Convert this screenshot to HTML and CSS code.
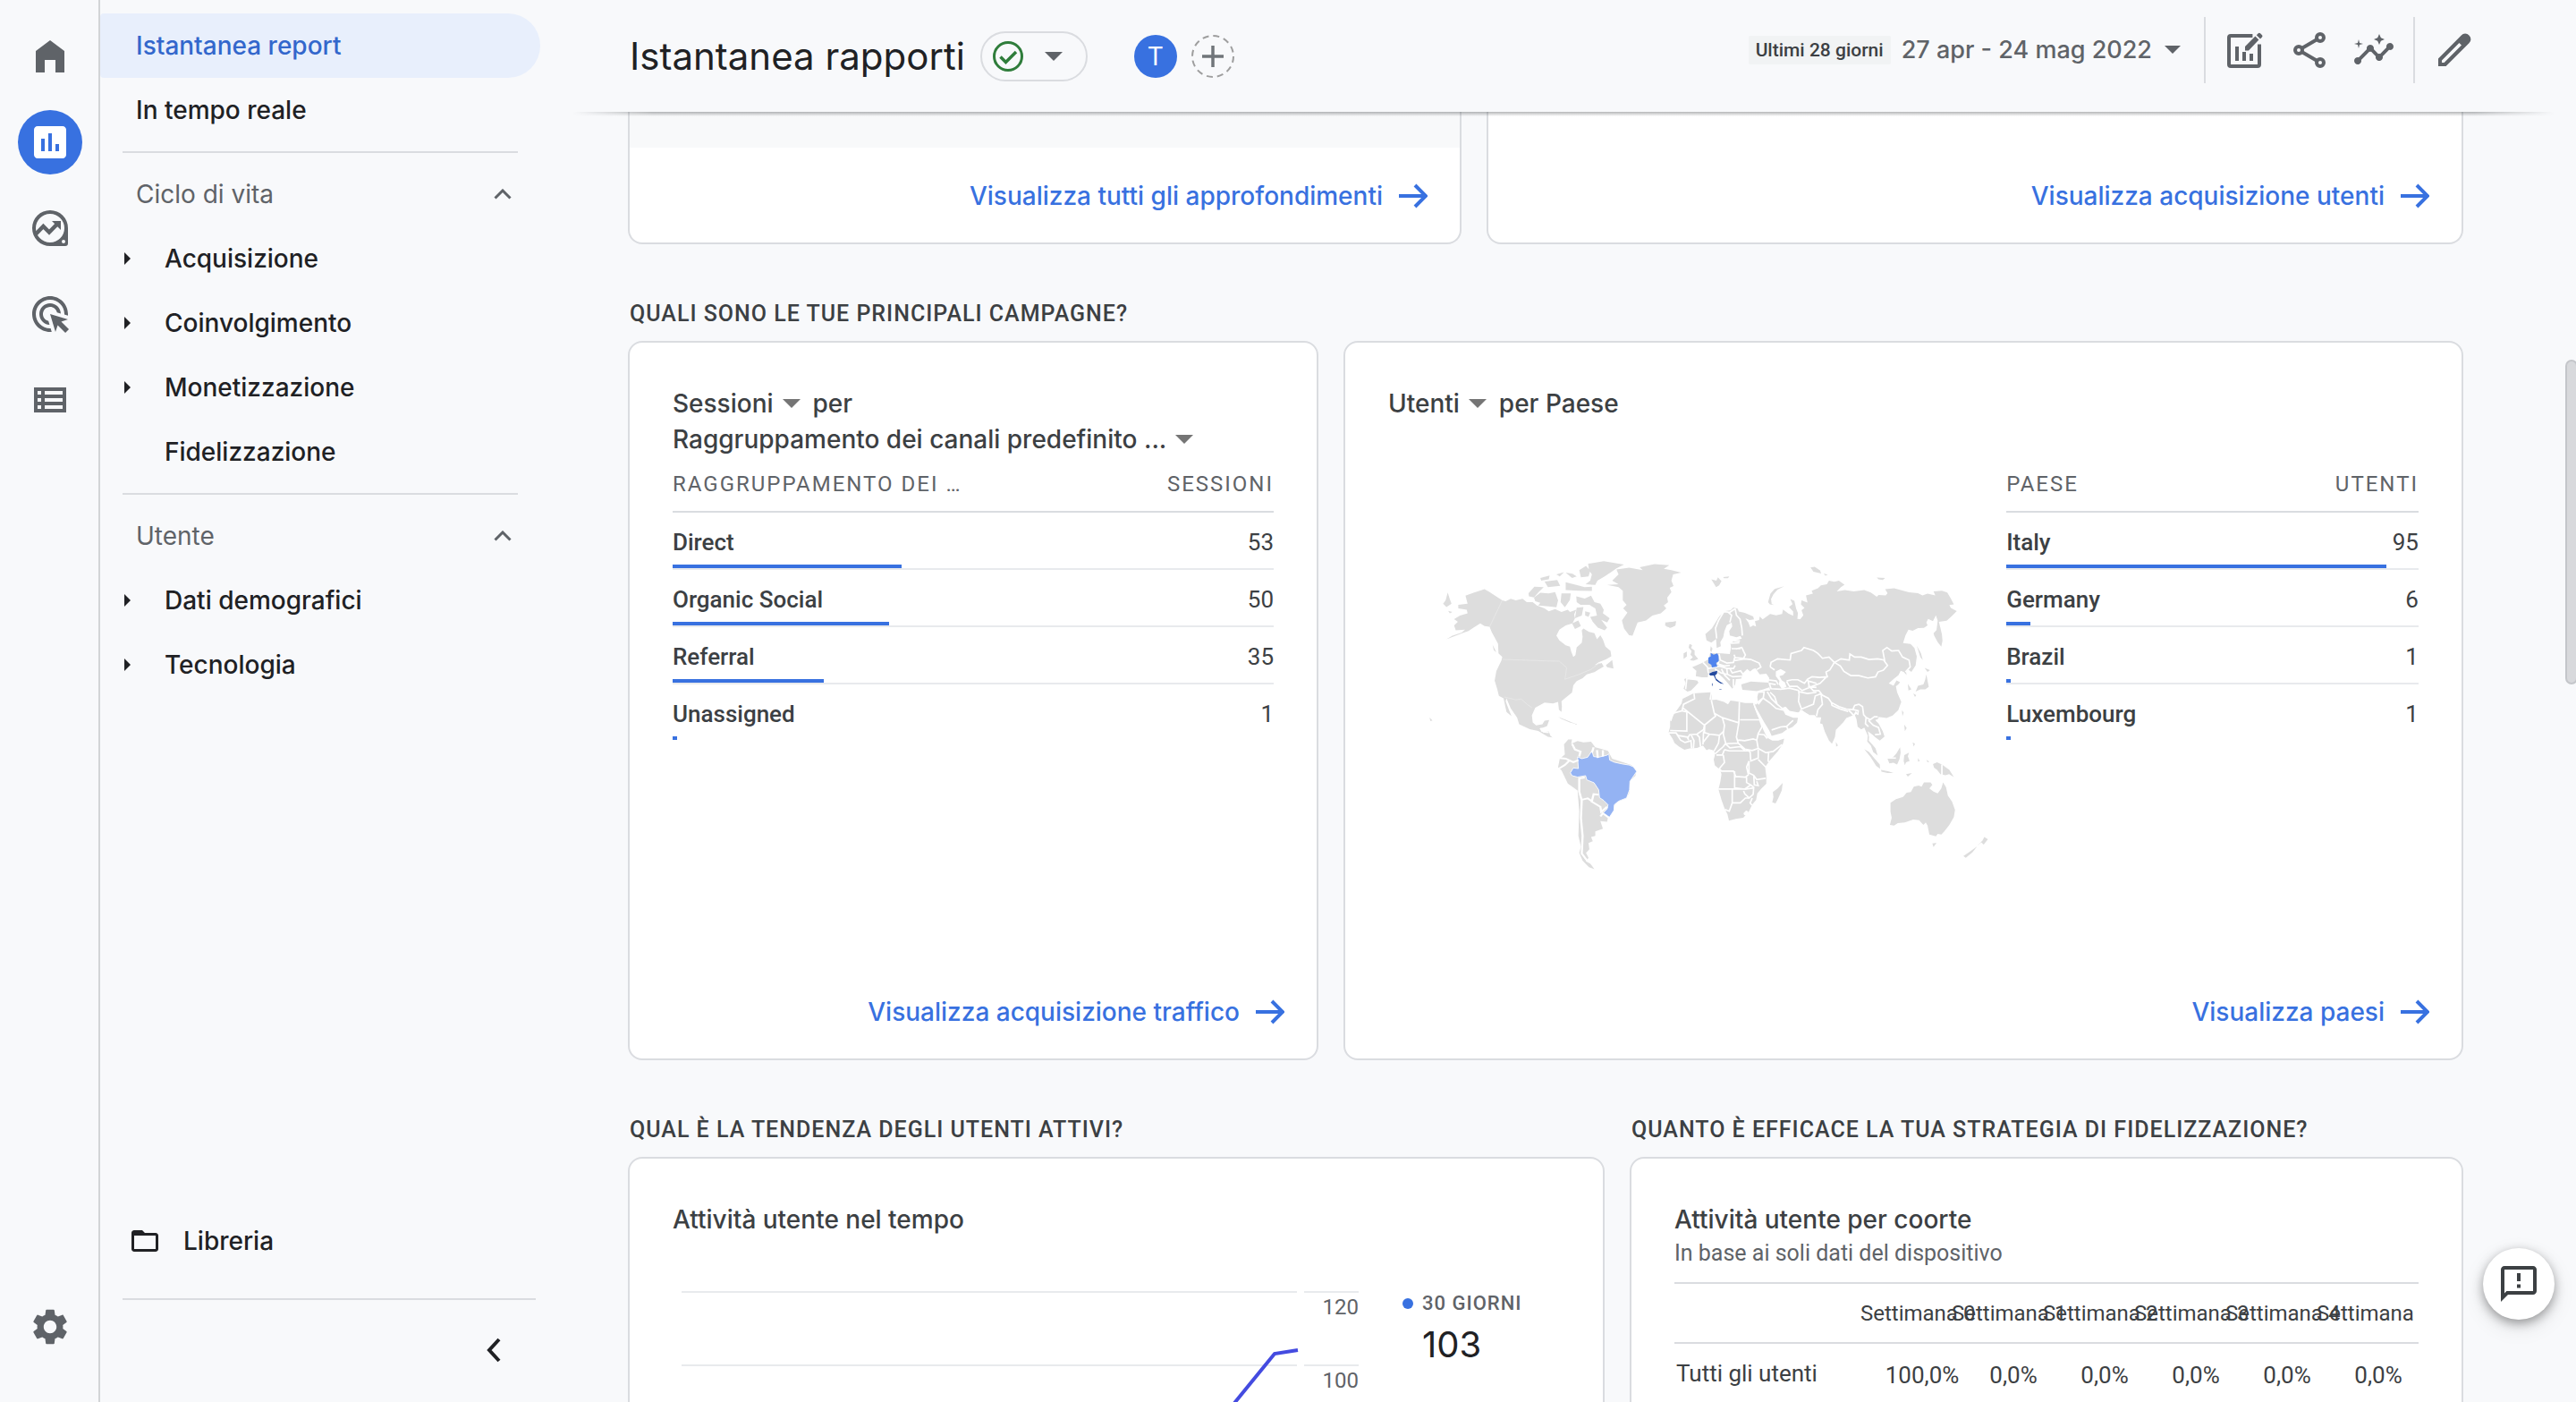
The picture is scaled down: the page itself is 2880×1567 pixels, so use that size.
FILE: index.html
```html
<!DOCTYPE html>
<html lang="it">
<head>
<meta charset="utf-8">
<title>Istantanea rapporti</title>
<link rel="stylesheet" href="styles.css">
</head>
<body>
<svg class="defs" aria-hidden="true">
  <symbol id="i-caret" viewBox="0 0 20 10"><path d="M0 0h20L10 10z"/></symbol>
  <symbol id="i-tri" viewBox="0 0 8 14"><path d="M0 0l7 7-7 7z"/></symbol>
  <symbol id="i-up" viewBox="0 0 20 12"><path d="M1.500 10.500L10 2l8.500 8.500" fill="none" stroke="currentColor" stroke-width="3"/></symbol>
  <symbol id="i-arrow" viewBox="0 0 32 28"><path d="M0 14h30M18 2l12 12-12 12" fill="none" stroke="currentColor" stroke-width="4"/></symbol>
</svg>
<div class="app">
  <nav class="rail" aria-label="Navigazione principale">
    <a class="rail-item" href="#" aria-label="Home"><svg class="icon" viewBox="0 0 24 24"><path d="M12 3L4 9v12h5v-7h6v7h5V9z"/></svg></a>
    <a class="rail-item rail-item--active" href="#" aria-label="Report"><svg class="icon" viewBox="0 0 24 24"><path d="M19 3H5c-1.100 0-2 .9-2 2v14c0 1.100.9 2 2 2h14c1.100 0 2-.9 2-2V5c0-1.100-.9-2-2-2zM9 17H7v-7h2v7zm4 0h-2V7h2v10zm4 0h-2v-4h2v4z"/></svg></a>
    <a class="rail-item" href="#" aria-label="Esplora"><svg class="icon" viewBox="0 0 24 24"><path fill-rule="evenodd" d="M12 2a10 10 0 0 1 10 10v8.500a1.500 1.500 0 0 1-1.500 1.500H12a10 10 0 0 1 0-20zm0 2a8 8 0 1 0 0 16 8 8 0 0 0 0-16zm7.500 14.500a1 1 0 1 0 0 2 1 1 0 0 0 0-2z"/><path d="M4 15.300l4.200-4.300 3.300 3.300 4.500-4.600" fill="none" stroke="currentColor" stroke-width="2.200"/><path d="M13 8h5v5z"/></svg></a>
    <a class="rail-item" href="#" aria-label="Pubblicità"><svg class="icon" viewBox="0 0 24 24"><path d="M11.710 17.990C8.530 17.840 6 15.220 6 12c0-3.310 2.690-6 6-6 3.220 0 5.840 2.530 5.990 5.710l-2.100-.63C15.480 9.310 13.890 8 12 8c-2.210 0-4 1.790-4 4 0 1.890 1.310 3.480 3.080 3.890l.63 2.100zM22 12c0 .3-.01.6-.04.9l-1.970-.59c.01-.1.01-.21.01-.31 0-4.420-3.580-8-8-8s-8 3.580-8 8 3.580 8 8 8c.1 0 .21 0 .31-.01l.59 1.970c-.3.03-.6.04-.9.04-5.520 0-10-4.480-10-10S6.480 2 12 2s10 4.480 10 10zm-3.770 4.260L22 15l-10-3 3 10 1.260-3.770 4.270 4.270 1.980-1.980-4.280-4.260z"/></svg></a>
    <a class="rail-item" href="#" aria-label="Configura"><svg class="icon" viewBox="0 0 24 24"><path d="M3 5v14h18V5H3zm4 2v2H5V7h2zm-2 6v-2h2v2H5zm0 2h2v2H5v-2zm14 2H9v-2h10v2zm0-4H9v-2h10v2zm0-4H9V7h10v2z"/></svg></a>
    <a class="rail-item rail-item--end" href="#" aria-label="Amministrazione"><svg class="icon" viewBox="0 0 24 24"><path d="M19.140 12.940c.04-.3.06-.61.06-.94 0-.32-.02-.64-.07-.94l2.030-1.580c.18-.14.23-.41.12-.61l-1.920-3.320c-.12-.22-.37-.29-.59-.22l-2.390.96c-.5-.38-1.030-.7-1.620-.94l-.36-2.540c-.04-.24-.24-.41-.48-.41h-3.840c-.24 0-.43.17-.47.41l-.36 2.540c-.59.24-1.130.57-1.620.94l-2.390-.96c-.22-.08-.47 0-.59.22L2.740 8.870c-.12.21-.08.47.12.61l2.030 1.580c-.05.3-.09.63-.09.94s.02.64.07.94l-2.030 1.580c-.18.14-.23.41-.12.61l1.920 3.320c.12.22.37.29.59.22l2.390-.96c.5.38 1.030.7 1.620.94l.36 2.540c.05.24.24.41.48.41h3.840c.24 0 .44-.17.47-.41l.36-2.540c.59-.24 1.130-.56 1.620-.94l2.390.96c.22.08.47 0 .59-.22l1.920-3.320c.12-.22.07-.47-.12-.61l-2.010-1.580zM12 15.600c-1.980 0-3.600-1.620-3.600-3.600s1.620-3.600 3.600-3.600 3.600 1.620 3.600 3.600-1.620 3.600-3.600 3.600z"/></svg></a>
  </nav>

  <aside class="side">
    <a class="side-row side-row--active" href="#">Istantanea report</a>
    <a class="side-row" href="#">In tempo reale</a>
    <hr class="side-line">
    <button class="side-row side-group" type="button">Ciclo di vita<svg class="chevron"><use href="#i-up"/></svg></button>
    <a class="side-row side-sub" href="#"><svg class="tri"><use href="#i-tri"/></svg>Acquisizione</a>
    <a class="side-row side-sub" href="#"><svg class="tri"><use href="#i-tri"/></svg>Coinvolgimento</a>
    <a class="side-row side-sub" href="#"><svg class="tri"><use href="#i-tri"/></svg>Monetizzazione</a>
    <a class="side-row side-sub" href="#"><span class="tri"></span>Fidelizzazione</a>
    <hr class="side-line">
    <button class="side-row side-group" type="button">Utente<svg class="chevron"><use href="#i-up"/></svg></button>
    <a class="side-row side-sub" href="#"><svg class="tri"><use href="#i-tri"/></svg>Dati demografici</a>
    <a class="side-row side-sub" href="#"><svg class="tri"><use href="#i-tri"/></svg>Tecnologia</a>
    <div class="side-foot">
      <a class="side-row side-library" href="#"><svg class="folder" viewBox="0 0 24 24"><path d="M20 6h-8l-2-2H4c-1.100 0-2 .9-2 2v12c0 1.100.9 2 2 2h16c1.100 0 2-.9 2-2V8c0-1.100-.9-2-2-2zm0 12H4V8h16v10z"/></svg>Libreria</a>
      <hr class="side-line side-line--wide">
      <button class="collapse" type="button" aria-label="Comprimi"><svg class="collapse-icon" viewBox="0 0 18 28"><path d="M15 2L4 14l11 12" fill="none" stroke="currentColor" stroke-width="4"/></svg></button>
    </div>
  </aside>

  <main class="main">
    <header class="head">
      <h1 class="title">Istantanea rapporti</h1>
      <button class="pill" type="button" aria-label="Stato dei dati">
        <svg class="check" viewBox="0 0 34 34"><circle cx="17" cy="17" r="15.500" fill="none" stroke="currentColor" stroke-width="3"/><path d="M8.500 17.500l6 6L26 12" fill="none" stroke="currentColor" stroke-width="3.500"/></svg>
        <svg class="caret"><use href="#i-caret"/></svg>
      </button>
      <span class="avatar">T</span>
      <button class="add" type="button" aria-label="Aggiungi confronto"><svg class="add-icon" viewBox="0 0 48 48"><circle cx="24" cy="24" r="23" fill="none" stroke="#9e9e9e" stroke-width="2" stroke-dasharray="7 5"/><path d="M12 24h24M24 12v24" stroke="#70757a" stroke-width="3.500"/></svg></button>
      <div class="tools">
        <button class="dates" type="button"><span class="range">Ultimi 28 giorni</span>27 apr - 24 mag 2022<svg class="caret caret--date"><use href="#i-caret"/></svg></button>
        <span class="bar-line"></span>
        <div class="tool-set">
          <button class="tool" type="button" aria-label="Personalizza report"><svg class="icon" viewBox="0 0 24 24"><path d="M16.200 4H4a1 1 0 0 0-1 1v15a1 1 0 0 0 1 1h15a1 1 0 0 0 1-1V8.800" fill="none" stroke="currentColor" stroke-width="2"/><path d="M6.500 10h2v8h-2zM10.500 13h2v5h-2zM14.500 14h2v4h-2z"/><path d="M12 12.200V10l5.700-5.700 2 2L14 12.200zM18.400 3.600l1-1a.8.8 0 0 1 1.100 0l1 1a.8.8 0 0 1 0 1.100l-1 1z"/></svg></button>
          <button class="tool" type="button" aria-label="Condividi"><svg class="icon" viewBox="0 0 24 24"><path d="M18 5L6 12l12 7" fill="none" stroke="currentColor" stroke-width="2"/><g fill="#f8f9fb" stroke="currentColor" stroke-width="2"><circle cx="18" cy="5" r="2"/><circle cx="6" cy="12" r="2"/><circle cx="18" cy="19" r="2"/></g></svg></button>
          <button class="tool" type="button" aria-label="Approfondimenti"><svg class="icon" viewBox="0 0 24 24"><path d="M21 8c-1.450 0-2.260 1.440-1.930 2.510l-3.550 3.560c-.3-.09-.74-.09-1.040 0l-2.550-2.550C12.270 10.450 11.460 9 10 9c-1.450 0-2.270 1.440-1.930 2.520l-4.560 4.550C2.440 15.740 1 16.550 1 18c0 1.100.9 2 2 2 1.450 0 2.260-1.440 1.930-2.510l4.550-4.560c.3.09.74.09 1.040 0l2.550 2.550C12.730 16.550 13.540 18 15 18c1.450 0 2.270-1.440 1.930-2.520l3.560-3.550C21.560 12.260 23 11.450 23 10c0-1.100-.9-2-2-2z"/><path d="M15 9l.94-2.070L18 6l-2.060-.93L15 3l-.92 2.070L12 6l2.080.93zM3.500 11L4 9l2-.5L4 8l-.5-2L3 8l-2 .5L3 9z"/></svg></button>
        </div>
        <span class="bar-line"></span>
        <button class="tool" type="button" aria-label="Modifica"><svg class="icon" viewBox="0 0 24 24"><path fill-rule="evenodd" d="M3 21v-4.300L15.900 3.800a2.800 2.800 0 0 1 4.300 0 2.800 2.800 0 0 1 0 4.300L7.300 21zM5 19h1.300L16 9.300 14.700 8 5 17.700z"/></svg></button>
      </div>
    </header>

    <div class="scroll">
      <div class="cards">
        <section class="card card--cut span-6">
          <div class="strip"></div>
          <a class="more" href="#">Visualizza tutti gli approfondimenti<svg class="arrow"><use href="#i-arrow"/></svg></a>
        </section>
        <section class="card card--cut span-7">
          <a class="more" href="#">Visualizza acquisizione utenti<svg class="arrow"><use href="#i-arrow"/></svg></a>
        </section>
      </div>

      <div class="cards">
        <h2 class="question span-13">QUALI SONO LE TUE PRINCIPALI CAMPAGNE?</h2>
        <section class="card card--tall span-5">
          <div class="card-body">
            <h3 class="card-title"><button class="pick" type="button">Sessioni<svg class="caret caret--pick"><use href="#i-caret"/></svg></button>per<br><button class="pick" type="button">Raggruppamento dei canali predefinito ...<svg class="caret caret--pick"><use href="#i-caret"/></svg></button></h3>
            <table class="data">
              <thead><tr><th scope="col">RAGGRUPPAMENTO DEI …</th><th scope="col">SESSIONI</th></tr></thead>
              <tbody>
                <tr><th scope="row">Direct<i class="meter" style="width:38.1%"></i></th><td>53</td></tr>
                <tr><th scope="row">Organic Social<i class="meter" style="width:36%"></i></th><td>50</td></tr>
                <tr><th scope="row">Referral<i class="meter" style="width:25.2%"></i></th><td>35</td></tr>
                <tr><th scope="row">Unassigned<i class="meter" style="width:0.7%"></i></th><td>1</td></tr>
              </tbody>
            </table>
          </div>
          <a class="more" href="#">Visualizza acquisizione traffico<svg class="arrow"><use href="#i-arrow"/></svg></a>
        </section>
        <section class="card card--tall span-8">
          <div class="card-body">
            <h3 class="card-title"><button class="pick" type="button">Utenti<svg class="caret caret--pick"><use href="#i-caret"/></svg></button>per Paese</h3>
            <div class="geo">
              <svg class="map" viewBox="0 0 690 480" role="img" aria-label="Mappa degli utenti per Paese">
                <g transform="translate(-52 -131) scale(.47194 .39541)">
                  <g class="land">
                    <path d="M293 722L312 714 338 704 350 712 380 735 388 738 400 731 412 735 428 731 438 740 452 740 462 750 480 758 490 766 505 760 520 768 535 762 540 768 555 762 550 775 552 786 546 800 530 806 515 818 508 835 515 848 530 862 540 866 543 880 548 895 553 890 556 868 568 855 570 838 568 820 572 815 585 824 598 828 604 845 612 834 618 846 624 866 636 878 638 893 625 902 608 910 598 918 615 912 620 922 608 930 598 938 580 944 570 955 556 963 548 975 545 995 530 1010 520 1020 521 1035 520 1050 514 1044 512 1022 500 1026 480 1024 458 1038 450 1060 452 1080 460 1088 475 1085 480 1075 491 1073 486 1090 478 1094 470 1096 472 1106 490 1105 494 1118 499 1122 488 1120 465 1104 445 1099 420 1085 415 1066 400 1040 390 1012 388 1020 395 1042 402 1062 390 1050 383 1012 372 1005 368 985 362 962 366 935 378 905 380 895 371 885 370 858 362 840 355 825 350 810 338 808 328 800 312 812 300 822 285 828 248 845 262 835 284 826 292 818 270 820 266 806 275 796 266 788 280 778 298 772 296 762 276 758 276 748 298 745z"/>
                    <path d="M628 692L655 690 640 680 655 662 650 648 680 643 712 650 705 642 740 633 775 636 762 646 780 650 803 657 784 662 780 680 785 695 776 700 780 712 770 728 772 740 762 750 768 758 755 772 735 778 720 792 700 798 688 835 680 834 668 815 663 792 676 770 666 758 674 748 665 735 665 708 655 698z"/>
                    <path d="M583 632L620 625 668 634 650 645 638 655 622 668 605 680 600 692 577 690 588 680 592 662 585 650zM562 650L578 638 588 652 584 668 566 670zM455 728L470 714 490 716 505 712 512 735 508 755 490 752 465 750 470 742 458 738zM442 715L456 697 478 698 466 712 455 727 443 724zM555 724L575 730 590 722 598 740 612 745 620 762 618 772 634 786 628 798 614 790 628 812 622 820 606 812 594 796 588 782 604 778 600 758 586 748 565 748 556 740zM480 682L510 678 517 694 488 698zM530 684L555 692 575 698 592 697 592 709 560 708 530 706zM520 716L542 716 540 734 528 755 518 740zM470 672L492 665 490 676 472 680zM508 662L526 656 516 668zM530 657L546 660 556 668 545 672zM556 756L572 754 568 778 552 786zM576 766L588 770 584 782 576 778zM545 800L560 792 566 808 552 816zM765 798L790 795 788 808 775 812 766 804zM625 918L640 904 643 928 628 924zM240 745L246 735 251 713 256 732 260 745 248 754zM357 860L366 882 360 876zM208 1066L215 1074 210 1076zM252 765L262 768 256 772zM512 1064L530 1072 545 1080 560 1086 540 1080 520 1070z"/>
                    <path d="M526 1142L536 1128 545 1128 543 1140 558 1132 572 1136 590 1134 600 1150 616 1155 630 1160 640 1182 685 1200 697 1215 695 1230 682 1245 680 1280 672 1295 648 1305 642 1330 630 1348 628 1360 612 1358 618 1380 600 1387 600 1400 590 1403 594 1415 584 1420 586 1438 578 1448 584 1462 578 1472 588 1478 598 1494 585 1488 570 1470 562 1448 566 1430 560 1400 562 1330 558 1272 535 1252 520 1215 512 1206 516 1182 528 1170z"/>
                  </g>
                  <path class="brazil" d="M541 1222L548 1208 560 1210 558 1177 568 1182 582 1178 592 1160 596 1176 608 1178 628 1172 632 1168 634 1186 645 1192 664 1197 680 1200 690 1205 698 1218 690 1232 682 1246 681 1270 674 1293 655 1302 645 1312 644 1328 633 1348 618 1336 628 1324 630 1312 620 1300 610 1292 608 1270 597 1250 580 1242 577 1230 558 1234 545 1230z"/>
                  <g class="faint"><path d="M380 735L350 810M381 902L435 904 480 906 515 907 532 925 530 945 528 958 560 945 590 930 610 912M385 1008L412 1016 425 1014 440 1030 450 1038"/></g>
                  <g class="edge"><path d="M562 1238L562 1275 568 1300 566 1350 570 1400 568 1450 582 1472M560 1238L575 1235M568 1298L582 1294 592 1302 596 1282 608 1284M590 1302L612 1318 614 1332 628 1318M612 1345L618 1336 634 1350M545 1140L552 1156 565 1162 562 1176M516 1180L530 1182 548 1192 560 1186M514 1210L528 1200 538 1188M596 1150L592 1165M604 1158L606 1180M618 1158L618 1176M470 1096L478 1106 490 1108"/></g>
                </g>
                <g transform="translate(298 119) scale(.33333)">
                  <g class="land">
                    <path d="M168 235L190 216 202 196 215 175 235 158 252 156 262 146 276 150 280 160 300 164 328 176 331 186 316 188 302 182 312 196 318 212 328 206 338 210 334 192 348 188 350 176 360 186 385 168 405 172 425 168 428 153 446 166 462 174 462 160 448 145 460 135 452 118 466 124 472 150 478 165 476 184 486 185 496 172 490 155 500 148 488 136 490 122 510 130 505 106 528 100 524 90 545 82 555 72 575 68 582 56 600 60 615 56 634 70 622 78 608 92 635 88 665 92 700 88 722 96 742 110 748 104 772 106 778 98 770 85 800 82 850 95 880 98 895 106 912 100 938 106 932 92 960 90 978 96 990 116 1000 136 985 138 990 148 1010 158 992 176 976 190 950 194 955 214 960 235 962 258 958 277 946 262 934 240 932 232 942 222 946 190 940 172 930 192 914 184 908 196 912 206 900 214 880 215 862 224 848 220 838 240 830 265 855 268 868 282 876 310 872 340 858 362 848 354 840 362 842 372 832 362 822 358 815 372 800 384 782 400 798 408 808 390 820 396 814 404 806 410 810 430 824 462 814 490 795 508 775 516 758 514 745 512 738 524 748 535 762 560 768 578 752 592 736 580 728 572 712 560 716 580 715 592 728 606 738 618 745 642 730 630 722 608 710 595 712 575 700 548 690 554 678 545 674 520 668 505 655 510 640 516 630 530 605 556 602 580 592 602 582 592 568 562 560 536 552 534 556 514 540 514 534 506 512 506 492 490 478 497 450 492 436 478 425 482 436 505 462 515 478 515 475 532 460 546 440 555 425 566 390 576 382 558 365 530 345 494 330 470 344 462 342 446 346 430 365 425 385 424 380 398 382 382 372 368 350 370 336 350 328 352 318 360 308 352 292 368 288 384 270 386 268 404 258 418 244 400 228 382 212 368 205 358 178 366 176 380 156 380 136 376 138 358 124 346 160 330 180 318 184 298 200 300 222 300 250 302 254 280 252 266 266 258 290 250 284 240 282 218 278 208 290 240 272 246 250 240 248 225 258 210 256 196 240 205 232 225 228 245 218 262 220 276 206 282 204 252 188 264 172 256z"/>
                    <path d="M288 404L320 394 355 396 380 398 386 412 362 420 340 426 318 424 292 422zM97 386L108 382 140 390 145 398 132 412 120 424 108 428 95 418 102 400zM115 268L124 272 120 282 132 290 132 304 144 318 128 324 116 322 126 312 118 304 122 292 112 280zM95 300L106 294 106 310 95 318zM184 290L186 276 192 284 188 296zM32 204L45 196 70 192 68 206 52 214 38 210zM188 52L205 56 210 45 222 58 214 72 204 78zM228 44L248 42 244 48 230 48zM520 12L534 10 552 22 556 32 530 26zM564 32L578 36 570 40zM742 46L770 47 762 54 748 52z"/>
                    <path d="M432 75L410 86 396 102 388 118 390 134 398 138 384 136 378 128 386 100 400 84zM876 274L890 300 896 322 888 312zM902 348L920 356 912 362zM908 370L916 412 904 420 888 420 872 428 880 408 898 404 904 388zM864 434L874 440 870 446zM846 402L858 420 848 424zM826 490L832 498 828 510zM605 596L612 608 606 612zM736 512L750 514 742 522z"/>
                    <path d="M700 620L716 630 735 652 752 672 753 686 740 676 722 648zM756 690L780 694 798 700 778 700 758 696zM778 652L796 648 808 634 820 614 822 632 818 654 810 672 798 666 784 668zM834 640L850 632 846 644 852 660 840 664 836 674 832 660zM834 538L842 550 836 560zM862 598L870 602 866 612zM880 650L886 660 880 662zM908 656L918 662 912 664zM930 670L944 664 960 672 985 690 1000 714 984 704 972 708 955 704 944 690 934 682zM840 704L860 700 846 712z"/>
                    <path d="M788 800L806 788 830 780 842 766 856 764 866 746 882 742 892 746 900 732 922 732 928 740 918 752 932 762 946 768 958 752 964 732 974 748 980 776 994 796 1004 824 1000 848 985 874 968 896 958 906 946 904 940 912 918 906 912 876 906 866 898 874 884 858 864 856 836 866 812 868 800 876 786 874 792 850 788 830zM928 936L942 934 932 948zM1032 978L1050 966 1078 946 1062 966 1040 984zM1078 944L1096 926 1102 914 1114 922 1100 940 1092 932z"/>
                    <path d="M128 434L150 432 185 430 190 440 188 456 205 455 230 462 244 470 252 458 270 460 300 466 328 466 334 486 344 510 354 530 362 556 375 582 392 592 412 592 432 585 428 602 410 628 386 655 368 680 372 710 372 736 356 752 342 768 338 790 325 806 314 828 295 850 270 854 247 860 242 838 232 818 222 790 212 755 218 730 222 705 218 690 200 675 196 655 200 640 198 625 180 620 172 624 160 608 140 616 115 618 98 622 80 612 65 600 58 585 45 565 50 545 50 525 62 505 88 468 92 452 112 442zM427 733L424 758 412 785 403 802 392 798 396 780 394 764 410 752z"/>
                  </g>
                  <path class="cutout" d="M404 360L420 352 438 362 428 372 416 376 424 390 434 396 440 412 424 418 414 404 416 392 404 376zM296 834a8 8 0 1 0 8-8zM330 372l30 0 10 12-16 8-30-2-30 4 6-14zM662 508l10-16 6 10z"/>
                  <g class="edge">
                    <path d="M330 468L345 505 362 545 378 580 M436 480L446 500 460 508"/>
                    <path d="M268 150L250 162 230 160 212 190 202 215 206 250M268 150L272 172 284 185 290 215 292 240M250 196L256 172 242 160M252 266L282 264M256 284L286 284M264 258L284 258M270 285L290 280 302 305 296 316 268 314 264 304M214 302L218 322 240 332 262 330 266 314M264 324L300 318 320 320 348 332 354 346 340 354M178 350L200 346 215 342 240 350 262 350 268 340M160 330L175 345 178 366M214 324L210 335 232 342 250 340M250 350L258 365 286 358 296 372M240 352L242 370 260 378 290 376M262 386L262 412M140 388L106 384 102 420M200 352L220 365 240 370M222 352L232 372 250 390"/>
                    <path d="M385 345L388 330 410 318 452 322 455 300 490 290 498 280 530 290 545 300 560 316 582 312 600 330 622 318 650 322 652 302 668 312 690 312 716 320 745 318 768 322 762 290 776 280 792 292 815 290 828 312 850 322 854 345 838 362M600 330L620 342 632 360 655 374 682 374 712 382 738 378 746 362 764 356 778 340 765 322M600 330L585 355 572 362 576 378 550 380 525 378 510 386 500 400 478 388 458 388 440 392M385 345L400 355M440 394L450 410 475 410 492 424 512 416 530 408 552 400 578 374M512 392L540 400M512 410L540 414M376 388L405 392 412 404M380 400L404 404M382 400L388 418 420 420 450 416 480 424 482 438 480 460 490 486 510 478 530 470 536 442 552 436 560 440M510 385L516 410 530 425 548 424 560 440 580 450 590 464 615 478 640 486 662 488 668 474 682 470 694 478M590 464L592 474 620 486 646 494M556 440L560 470 545 488 540 510M482 428L510 434 540 430M485 490L515 508M648 490L658 500 668 512M664 488L680 492 678 506M694 476L698 505 706 514 720 522 734 512 745 512M706 514L704 535 714 545M714 524L730 540 748 548 754 570 736 572M345 430L365 428 362 448 345 462M362 448L345 470M375 428L390 452 406 468 430 488 450 500M362 450L385 466 405 484 430 490M385 430L400 445 408 468M390 556L420 546 440 544 462 524M440 544L446 558M335 470L345 462M960 672L960 706M772 650L806 650"/>
                    <path d="M130 434L132 452 95 470 90 492M52 526L60 500 90 492 106 496 106 560 50 558M90 480L165 540 162 555 140 570 115 572 108 585M188 456L198 500 202 510 165 540M188 430L184 455M198 500L225 515 280 532M282 462L280 532 272 580 278 600 235 602 228 612 200 636M284 522L350 522M225 515L232 540 228 570 236 600M166 540L165 565 182 570 215 574 230 560M162 560L160 605M45 566L70 566 85 590 100 598 120 592 122 618M70 566L78 575 108 580 112 590M120 572L130 592 128 618M140 572L148 580 152 612M182 570L160 598M215 576L212 600 198 626M350 522L358 545 345 568 340 590 328 586 300 592 278 590M278 600L300 620 325 625 345 618 340 590M345 618L370 632 395 628 425 605M375 585L365 572 345 570M380 630L378 660 385 665M345 622L345 650 320 660 318 630 312 625M235 602L250 616 285 612 300 624M232 622L248 626 312 626M205 640L225 640 232 622M228 640L232 665 215 685 222 694 262 694 270 712 302 714 312 706 306 680 314 660M345 655L370 680M314 662L314 700 330 708 340 722 370 718M266 694L266 750 300 754 320 740 306 732 306 714M212 754L260 754 300 754M330 708L332 740 345 742 340 728M320 740L330 748 328 772 315 784 300 770 296 760M258 756L258 800 248 828 234 822M258 800L285 800 302 784 315 784M325 784L318 800 324 808M300 755L330 750"/>
                  </g>
                  <path class="germany" d="M178 314L186 310 186 298 196 304 208 300 212 308 213 326 204 332 208 344 190 347 188 338 178 332z"/>
                  <path class="italy" d="M180 368L192 362 208 358 207 368 200 374 204 384 216 394 230 402 218 400 204 390 196 374 184 374zM190 400h2v8h-2zM214 420h8v2h-6z"/>
                </g>
              </svg>
              <table class="data">
                <thead><tr><th scope="col">PAESE</th><th scope="col">UTENTI</th></tr></thead>
                <tbody>
                  <tr><th scope="row">Italy<i class="meter" style="width:92.2%"></i></th><td>95</td></tr>
                  <tr><th scope="row">Germany<i class="meter" style="width:5.8%"></i></th><td>6</td></tr>
                  <tr><th scope="row">Brazil<i class="meter" style="width:1%"></i></th><td>1</td></tr>
                  <tr><th scope="row">Luxembourg<i class="meter" style="width:1%"></i></th><td>1</td></tr>
                </tbody>
              </table>
            </div>
          </div>
          <a class="more" href="#">Visualizza paesi<svg class="arrow"><use href="#i-arrow"/></svg></a>
        </section>
      </div>

      <div class="cards">
        <h2 class="question span-7">QUAL È LA TENDENZA DEGLI UTENTI ATTIVI?</h2>
        <h2 class="question span-6">QUANTO È EFFICACE LA TUA STRATEGIA DI FIDELIZZAZIONE?</h2>
        <section class="card card--tall span-7">
          <div class="card-body">
            <h3 class="card-title card-title--line">Attività utente nel tempo</h3>
            <div class="trend">
              <svg class="chart" viewBox="0 0 768 240" role="img" aria-label="Andamento degli utenti attivi">
                <path d="M10 21h688M706 21h61M10 103h688M706 103h61M10 185h688M706 185h61" stroke="#e8eaed" stroke-width="2"/>
                <g class="tick"><text x="767" y="46">120</text><text x="767" y="128">100</text></g>
                <path d="M570 220L629 144 673 90 699 86" fill="none" stroke="#444be0" stroke-width="4"/>
              </svg>
              <dl class="legend"><dt>30 GIORNI</dt><dd>103</dd></dl>
            </div>
          </div>
        </section>
        <section class="card card--tall span-6">
          <div class="card-body">
            <h3 class="card-title card-title--line">Attività utente per coorte</h3>
            <p class="note">In base ai soli dati del dispositivo</p>
            <table class="cohort">
              <thead><tr><td></td><th scope="col">Settimana 0</th><th scope="col">Settimana 1</th><th scope="col">Settimana 2</th><th scope="col">Settimana 3</th><th scope="col">Settimana 4</th><th scope="col">Settimana</th></tr></thead>
              <tbody><tr><th scope="row">Tutti gli utenti</th><td>100,0%</td><td>0,0%</td><td>0,0%</td><td>0,0%</td><td>0,0%</td><td>0,0%</td></tr></tbody>
            </table>
          </div>
        </section>
      </div>
    </div>
    <div class="thumb"></div>
    <button class="feedback" type="button" aria-label="Invia feedback"><svg class="icon" viewBox="0 0 24 24"><path d="M20 2H4c-1.100 0-2 .9-2 2v18l4-4h14c1.100 0 2-.9 2-2V4c0-1.100-.9-2-2-2zm0 14H5.200L4 17.200V4h16v12zM11 6h2v4.500h-2zm0 6.200h2v2h-2z"/></svg></button>
  </main>
</div>
</body>
</html>
```
FILE: styles.css
```css
* { box-sizing: border-box; }

body {
  margin: 0;
  background: #f8f9fb;
  color: #202124;
  font: 500 28px/40px Inter, "Liberation Sans", sans-serif;
}

h1, h2, h3, p, dl, dd { margin: 0; font-size: inherit; font-weight: inherit; }
a { color: inherit; text-decoration: none; }
svg { display: block; fill: currentColor; flex: none; }

button {
  margin: 0;
  padding: 0;
  border: 0;
  background: none;
  color: inherit;
  font: inherit;
  text-align: left;
}

.defs { position: absolute; width: 0; height: 0; }

.app {
  display: flex;
  height: 100vh;
  overflow: hidden;
}

.icon { width: 48px; height: 48px; }

/* Icon rail */
.rail {
  display: flex;
  flex: none;
  flex-direction: column;
  gap: 24px;
  width: 112px;
  padding: 27px 18px 48px 20px;
  border-right: 2px solid #d2d4d6;
  color: #5f6368;
}

.rail-item {
  display: flex;
  align-items: center;
  justify-content: center;
  width: 72px;
  height: 72px;
  border-radius: 50%;
}

.rail-item--active { background: #3871e0; color: #fff; }
.rail-item--end { margin-top: auto; }

/* Report navigation */
.side {
  display: flex;
  flex: none;
  flex-direction: column;
  width: 528px;
  padding-top: 15px;
}

.side-row {
  display: flex;
  align-items: center;
  width: 492px;
  height: 72px;
  padding-left: 40px;
}

.side-row--active {
  border-radius: 4px 36px 36px 4px;
  background: #e8effc;
  color: #3367cc;
}

.side-line {
  width: 442px;
  height: 2px;
  margin: 10px 0 10px 25px;
  border: 0;
  background: #dadce0;
}

.side-line--wide { width: 462px; margin: 28px 0 32px 25px; }
.side-group { justify-content: space-between; padding-right: 32px; color: #5f6368; font-weight: 400; }
.chevron { width: 20px; height: 12px; }
.side-sub { gap: 37px; padding-left: 27px; }
.tri { width: 8px; height: 14px; }
.side-foot { margin-top: auto; padding-bottom: 34px; }
.side-library { gap: 25px; padding-left: 32px; }
.folder { width: 36px; height: 36px; }

.collapse {
  display: flex;
  align-items: center;
  justify-content: center;
  width: 48px;
  height: 48px;
  margin-left: 416px;
}

.collapse-icon { width: 18px; height: 28px; }

/* Page header */
.main {
  position: relative;
  display: flex;
  flex: 1;
  flex-direction: column;
  min-width: 0;
}

.head {
  display: flex;
  align-items: center;
  flex: none;
  height: 125px;
  padding: 0 112px 0 64px;
}

.title { font-size: 42px; font-weight: 400; line-height: 56px; }

.pill {
  display: flex;
  align-items: center;
  gap: 24px;
  width: 120px;
  height: 56px;
  margin-left: 17px;
  padding-left: 12px;
  border: 2px solid #dadce0;
  border-radius: 28px;
}

.check { width: 34px; height: 34px; color: #2f7d3b; }
.caret { width: 20px; height: 10px; color: #5f6368; }

.avatar {
  width: 48px;
  height: 48px;
  margin-left: 52px;
  border-radius: 50%;
  background: #3871e0;
  color: #fff;
  font-weight: 400;
  line-height: 48px;
  text-align: center;
}

.add { margin-left: 16px; }
.add-icon { width: 48px; height: 48px; }

.tools {
  display: flex;
  align-items: center;
  gap: 20px;
  margin: 0 0 14px auto;
  color: #5f6368;
}

.dates {
  display: flex;
  align-items: center;
  margin-right: 6px;
  font-size: 27px;
}

.range {
  margin-right: 12px;
  padding: 0 8px;
  border-radius: 2px;
  background: #f1f3f4;
  color: #3c4043;
  font: 500 21px/32px Roboto, sans-serif;
}

.caret--date { width: 18px; height: 9px; margin-left: 14px; }
.bar-line { width: 2px; height: 74px; background: #dadce0; }
.tool-set { display: flex; gap: 24px; }

/* Scrolled report */
.scroll {
  position: relative;
  flex: 1;
  overflow: hidden;
  padding: 0 126px 0 62px;
}

.scroll::before {
  content: "";
  position: absolute;
  z-index: 1;
  top: 0;
  left: 0;
  right: 24px;
  height: 5px;
  background: linear-gradient(rgb(60 64 67 / 38%), rgb(60 64 67 / 0%));
  mask-image: linear-gradient(90deg, transparent, #000 90px, #000 calc(100% - 90px), transparent);
}

.cards {
  display: grid;
  grid-template-columns: repeat(13, minmax(0, 1fr));
  column-gap: 28px;
}

.cards + .cards { margin-top: 64px; }
.span-5 { grid-column: span 5; }
.span-6 { grid-column: span 6; }
.span-7 { grid-column: span 7; }
.span-8 { grid-column: span 8; }
.span-13 { grid-column: span 13; }

.question {
  margin: 0 0 16px 2px;
  color: #3c4043;
  font: 500 25px/28px Roboto, sans-serif;
  letter-spacing: 1px;
}

.card {
  display: flex;
  flex-direction: column;
  border: 2px solid #dadce0;
  border-radius: 16px;
  background: #fff;
  color: #3c4043;
}

.card--cut {
  height: 148px;
  border-top: 0;
  border-radius: 0 0 16px 16px;
}

.card--tall { min-height: 804px; }
.card-body { padding: 48px 48px 0; }
.strip { height: 40px; background: #f8f9fa; }

.more {
  display: flex;
  align-items: center;
  align-self: flex-end;
  gap: 18px;
  height: 48px;
  margin: auto 36px 28px 0;
  color: #3871e0;
}

.arrow { width: 32px; height: 28px; }
.card-title { min-height: 80px; }
.card-title--line { min-height: 40px; }
.pick { display: inline-flex; align-items: center; }
.caret--pick { margin: 0 14px 0 10px; color: #757575; }

/* Metric tables */
.data {
  width: 100%;
  border-collapse: collapse;
  align-self: start;
  color: #3c4043;
  font: 500 26px/32px Roboto, sans-serif;
}

.data tr { position: relative; }

.data thead th {
  height: 61px;
  padding: 0;
  border-bottom: 2px solid #dadce0;
  color: #5f6368;
  font-size: 24px;
  font-weight: 400;
  letter-spacing: 2px;
  text-align: left;
}

.data tbody th,
.data td {
  height: 64px;
  padding: 4px 0 0;
  border-bottom: 2px solid #e8eaed;
  font-weight: 500;
  text-align: left;
}

.data td { font-weight: 400; }
.data td:last-child, .data thead th:last-child { text-align: right; }
.data tbody tr:last-child > * { border-bottom-color: transparent; }

.meter {
  position: absolute;
  left: 0;
  bottom: 1px;
  height: 4px;
  background: #3871e0;
}

.geo { display: grid; grid-template-columns: 3fr 2fr; }
.map { width: 100%; overflow: visible; }
.land { fill: #ddd; }
.brazil { fill: #94b3f3; stroke: #fff; stroke-width: 2; }
.germany { fill: #5084ee; }
.italy { fill: #244a9e; }
.cutout { fill: #fff; }
.edge { fill: none; stroke: #fff; stroke-width: 5; }
.faint { fill: none; stroke: #e8e8e8; stroke-width: 2; }

/* Trend chart */
.trend { display: flex; gap: 48px; }
.chart { width: 768px; height: 240px; margin-top: 40px; }

.tick {
  fill: #5f6368;
  font: 400 24px Roboto, sans-serif;
  text-anchor: end;
}

.legend { padding-top: 60px; }

.legend dt {
  display: flex;
  align-items: center;
  gap: 10px;
  color: #5f6368;
  font: 500 22px/28px Roboto, sans-serif;
  letter-spacing: 1px;
}

.legend dt::before {
  content: "";
  width: 12px;
  height: 12px;
  border-radius: 50%;
  background: #3871e0;
}

.legend dd {
  padding: 6px 0 0 22px;
  color: #202124;
  font-size: 40px;
  font-weight: 400;
  line-height: 52px;
}

/* Cohort table */
.note { color: #5f6368; font: 400 25px/36px Roboto, sans-serif; }

.cohort {
  width: 100%;
  margin-top: 14px;
  border-collapse: collapse;
  table-layout: fixed;
  font: 400 26px/32px Roboto, sans-serif;
}

.cohort td, .cohort th {
  width: 102px;
  height: 67px;
  padding: 0;
  border-top: 2px solid #dadce0;
  font-weight: 400;
  text-align: left;
  white-space: nowrap;
}

.cohort tr > :first-child { width: auto; padding-left: 2px; }
.cohort tr > :last-child { width: 96px; }
.cohort thead th { font-size: 24px; text-indent: -18px; }
.cohort tbody td { padding-top: 4px; text-align: center; }
.cohort tbody td:last-child { padding-left: 6px; }

.thumb {
  position: absolute;
  top: 402px;
  right: -2px;
  width: 14px;
  height: 363px;
  border: 2px solid #c4c6ca;
  border-radius: 7px;
  background: #d8d9dc;
}

.feedback {
  position: absolute;
  right: 24px;
  bottom: 92px;
  display: flex;
  align-items: center;
  justify-content: center;
  width: 80px;
  height: 80px;
  border-radius: 50%;
  background: #fff;
  box-shadow: 0 4px 12px rgb(0 0 0 / 35%), 0 8px 24px rgb(0 0 0 / 10%);
  color: #3c4043;
}
```
